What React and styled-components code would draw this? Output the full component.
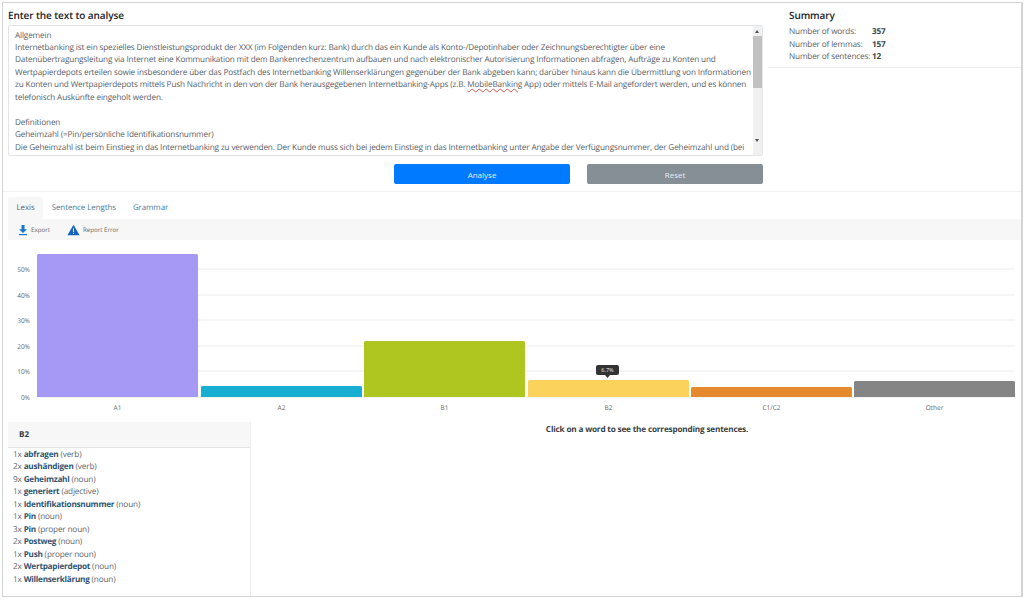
import React from "react";
import styled, { createGlobalStyle } from "styled-components";

const GlobalStyle = createGlobalStyle`
  html, body {
    margin: 0;
    padding: 0;
    background: #fff;
  }
  body {
    font-family: "Open Sans", "Liberation Sans", sans-serif;
    color: #495057;
    text-rendering: geometricPrecision;
  }
`;

const Frame = styled.div`
  width: 1018px;
  height: 593px;
  margin: 2px 0 0 2px;
  border: 1px solid #d4d4d4;
  border-right-width: 2px;
  box-sizing: content-box;
  display: flex;
  flex-direction: column;
  overflow: hidden;
`;

const TopRow = styled.div`
  display: flex;
  height: 188px;
  border-bottom: 1px solid #f1f1f1;
  flex: none;
`;

const InputPane = styled.div`
  width: 755px;
  padding: 5px 0 0 5px;
  flex: none;
`;

const Heading = styled.h2`
  margin: 0 0 2px;
  font-size: 10px;
  letter-spacing: -0.1px;
  line-height: 15px;
  font-weight: 600;
  color: #212529;
`;

const TextBox = styled.div`
  position: relative;
  height: 131px;
  width: 755px;
  box-sizing: border-box;
  border: 1px solid #e2e5e8;
  border-radius: 2px;
  padding: 3.5px 9px 0 6px;
  overflow: hidden;
  font-size: 8.2px;
  letter-spacing: -0.15px;
  line-height: 12.45px;
  color: #5b6268;
`;

const TextLine = styled.div`
  white-space: nowrap;
  min-height: 12.45px;
`;

const Misspelled = styled.span`
  text-decoration: underline wavy #d9534f 0.6px;
`;

const ScrollTrack = styled.div`
  position: absolute;
  top: 0;
  right: 0;
  bottom: 0;
  width: 9px;
  background: #f1f1f1;
`;

const ScrollThumb = styled.div`
  position: absolute;
  top: 10px;
  left: 0;
  width: 9px;
  height: 52px;
  background: #c1c1c1;
`;

const ScrollArrow = styled.div`
  position: absolute;
  left: 2px;
  width: 0;
  height: 0;
  border-left: 2.5px solid transparent;
  border-right: 2.5px solid transparent;
  ${(p) => (p.$up ? "top: 4px; border-bottom: 3px solid #505050;" : "bottom: 13px; border-top: 3px solid #505050;")}
`;

const Actions = styled.div`
  display: flex;
  justify-content: flex-end;
  gap: 17px;
  margin-top: 8px;
`;

const ActionButton = styled.button`
  width: ${(p) => p.$width}px;
  height: 20px;
  border: none;
  border-radius: 2px;
  padding: 0;
  font: inherit;
  font-size: 8px;
  color: #e6edf5;
  background: ${(p) => p.$color};
`;

const SummaryPane = styled.div`
  flex: 1;
  margin-left: 5px;
`;

const SummaryBox = styled.div`
  height: 65px;
  box-sizing: border-box;
  padding: 5px 0 0 21px;
  border-bottom: 1px solid #ececec;
`;

const SummaryRows = styled.div`
  padding-top: 1px;
`;

const SummaryRow = styled.div`
  display: flex;
  font-size: 8.2px;
  letter-spacing: -0.15px;
  line-height: 12.5px;
  color: #5b6268;
  white-space: nowrap;
`;

const SummaryLabel = styled.span`
  width: 83px;
  flex: none;
`;

const SummaryValue = styled.b`
  font-weight: 700;
  color: #3d4348;
`;

const Tabs = styled.div`
  display: flex;
  height: 22px;
  margin: 5px 0 0 5px;
  flex: none;
`;

const Tab = styled.div`
  padding: 0 8.5px;
  line-height: 23px;
  font-size: 7.9px;
  letter-spacing: -0.05px;
  color: ${(p) => (p.$active ? "#5b6268" : "#4a7a9b")};
  background: ${(p) => (p.$active ? "#f7f7f7" : "transparent")};
  border-radius: 2px 2px 0 0;
`;

const Toolbar = styled.div`
  display: flex;
  align-items: center;
  height: 21px;
  margin-left: 5px;
  padding-left: 9px;
  background: #f7f7f7;
  flex: none;
`;

const ToolItem = styled.div`
  display: flex;
  align-items: center;
  gap: ${(p) => p.$gap}px;
  margin-right: ${(p) => p.$after || 0}px;
  font-size: 6.2px;
  color: #666;
`;

const Chart = styled.svg`
  display: block;
  flex: none;
  width: 1018px;
  height: 182px;
  font-family: "Open Sans", "Liberation Sans", sans-serif;
`;

const Bottom = styled.div`
  display: flex;
  flex: 1;
  min-height: 0;
`;

const WordPanel = styled.div`
  width: 242px;
  margin-left: 5px;
  border-right: 1px solid #eeeeee;
  flex: none;
`;

const WordHeader = styled.div`
  height: 25px;
  line-height: 25px;
  padding-left: 11px;
  background: #f7f7f7;
  border-bottom: 1px solid #e4e4e4;
  font-size: 8px;
  font-weight: 700;
  color: #343a40;
`;

const WordList = styled.ul`
  list-style: none;
  margin: 0;
  padding: 1px 0 0 5px;
`;

const WordItem = styled.li`
  font-size: 8.2px;
  letter-spacing: -0.15px;
  line-height: 12.45px;
  color: #60666c;
  white-space: nowrap;
`;

const WordLink = styled.b`
  font-weight: 700;
  letter-spacing: -0.25px;
  color: #2f5573;
`;

const HintPane = styled.div`
  flex: 1;
  padding-top: 2px;
  padding-left: 22px;
  text-align: center;
  font-size: 8.2px;
  letter-spacing: -0.18px;
  line-height: 12px;
  font-weight: 700;
  color: #3a3f44;
`;

const bars = [
  { label: "A1", x: 34, top: 251, color: "#a699f5" },
  { label: "A2", x: 198, top: 383, color: "#17aed2" },
  { label: "B1", x: 361, top: 338, color: "#aec61f" },
  { label: "B2", x: 525, top: 377, color: "#fbd35c" },
  { label: "C1/C2", x: 688, top: 384, color: "#e68a2e" },
  { label: "Other", x: 851, top: 378, color: "#858585" },
];

const ticks = [
  { label: "50%", y: 266 },
  { label: "40%", y: 292 },
  { label: "30%", y: 317 },
  { label: "20%", y: 343 },
  { label: "10%", y: 368 },
  { label: "0%", y: 394 },
];

const words = [
  ["1x", "abfragen", "verb"],
  ["2x", "aushändigen", "verb"],
  ["9x", "Geheimzahl", "noun"],
  ["1x", "generiert", "adjective"],
  ["1x", "Identifikationsnummer", "noun"],
  ["1x", "Pin", "noun"],
  ["3x", "Pin", "proper noun"],
  ["2x", "Postweg", "noun"],
  ["1x", "Push", "proper noun"],
  ["2x", "Wertpapierdepot", "noun"],
  ["1x", "Willenserklärung", "noun"],
];

function LexisChart() {
  return (
    <Chart viewBox="0 237 1018 182">
      {ticks.map((t) => (
        <g key={t.label}>
          <line x1="34" x2="1012" y1={t.y} y2={t.y} stroke="#ececec" strokeWidth="1" />
          <text x="27" y={t.y + 2.5} textAnchor="end" fontSize="6.5" fill="#666">
            {t.label}
          </text>
        </g>
      ))}
      {bars.map((b) => (
        <g key={b.label}>
          <path
            d={`M${b.x} 394V${b.top + 1.5}q0-1.5 1.5-1.5h158q1.5 0 1.5 1.5V394z`}
            fill={b.color}
          />
          <text x={b.x + 80.5} y="407" textAnchor="middle" fontSize="6.5" fill="#666">
            {b.label}
          </text>
        </g>
      ))}
      <rect x="593" y="362" width="23" height="10" rx="2" fill="#333" />
      <path d="M602 372h5l-2.5 3z" fill="#333" />
      <text x="604.5" y="369.2" textAnchor="middle" fontSize="5.6" fill="#eee">
        6.7%
      </text>
    </Chart>
  );
}

export default function App() {
  return (
    <>
      <GlobalStyle />
      <Frame>
        <TopRow>
          <InputPane>
            <Heading>Enter the text to analyse</Heading>
            <TextBox>
              <TextLine>Allgemein</TextLine>
              <TextLine>Internetbanking ist ein spezielles Dienstleistungsprodukt der XXX (im Folgenden kurz: Bank) durch das ein Kunde als Konto-/Depotinhaber oder Zeichnungsberechtigter über eine</TextLine>
              <TextLine>Datenübertragungsleitung via Internet eine Kommunikation mit dem Bankenrechenzentrum aufbauen und nach elektronischer Autorisierung Informationen abfragen, Aufträge zu Konten und</TextLine>
              <TextLine>Wertpapierdepots erteilen sowie insbesondere über das Postfach des Internetbanking Willenserklärungen gegenüber der Bank abgeben kann; darüber hinaus kann die Übermittlung von Informationen</TextLine>
              <TextLine>zu Konten und Wertpapierdepots mittels Push Nachricht in den von der Bank herausgegebenen Internetbanking-Apps (z.B. <Misspelled>MobileBanking</Misspelled> App) oder mittels E-Mail angefordert werden, und es können</TextLine>
              <TextLine>telefonisch Auskünfte eingeholt werden.</TextLine>
              <TextLine />
              <TextLine>Definitionen</TextLine>
              <TextLine>Geheimzahl (=Pin/persönliche Identifikationsnummer)</TextLine>
              <TextLine>Die Geheimzahl ist beim Einstieg in das Internetbanking zu verwenden. Der Kunde muss sich bei jedem Einstieg in das Internetbanking unter Angabe der Verfügungsnummer, der Geheimzahl und (bei</TextLine>
              <ScrollTrack>
                <ScrollArrow $up />
                <ScrollThumb />
                <ScrollArrow />
              </ScrollTrack>
            </TextBox>
            <Actions>
              <ActionButton $width={176} $color="#007bff">Analyse</ActionButton>
              <ActionButton $width={176} $color="#868e96">Reset</ActionButton>
            </Actions>
          </InputPane>
          <SummaryPane>
            <SummaryBox>
              <Heading>Summary</Heading>
              <SummaryRows>
                <SummaryRow><SummaryLabel>Number of words:</SummaryLabel><SummaryValue>357</SummaryValue></SummaryRow>
                <SummaryRow><SummaryLabel>Number of lemmas:</SummaryLabel><SummaryValue>157</SummaryValue></SummaryRow>
                <SummaryRow><SummaryLabel>Number of sentences:</SummaryLabel><SummaryValue>12</SummaryValue></SummaryRow>
              </SummaryRows>
            </SummaryBox>
          </SummaryPane>
        </TopRow>
        <Tabs>
          <Tab $active>Lexis</Tab>
          <Tab>Sentence Lengths</Tab>
          <Tab>Grammar</Tab>
        </Tabs>
        <Toolbar>
          <ToolItem $gap={2} $after={17}>
            <svg width="12" height="12" viewBox="0 0 12 12">
              <path d="M4.5 1h3v4.2h2.5L6 9 2 5.2h2.5z" fill="#1976d2" />
              <rect x="2" y="10" width="8" height="1.2" fill="#1976d2" />
            </svg>
            Export
          </ToolItem>
          <ToolItem $gap={3}>
            <svg width="13" height="12" viewBox="0 0 13 12">
              <path d="M6.5 .8L12.6 11.2H.4z" fill="#1565c0" />
              <rect x="6" y="4.4" width="1" height="3.6" fill="#fff" />
              <rect x="6" y="8.8" width="1" height="1" fill="#fff" />
            </svg>
            Report Error
          </ToolItem>
        </Toolbar>
        <LexisChart />
        <Bottom>
          <WordPanel>
            <WordHeader>B2</WordHeader>
            <WordList>
              {words.map(([count, word, kind], i) => (
                <WordItem key={i}>
                  {count} <WordLink>{word}</WordLink> ({kind})
                </WordItem>
              ))}
            </WordList>
          </WordPanel>
          <HintPane>Click on a word to see the corresponding sentences.</HintPane>
        </Bottom>
      </Frame>
    </>
  );
}
